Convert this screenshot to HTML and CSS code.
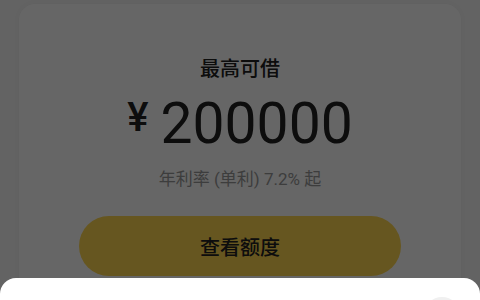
FILE: index.html
```html
<!DOCTYPE html>
<html lang="zh-CN">
<head>
<meta charset="utf-8">
<title>最高可借</title>
<link rel="stylesheet" href="styles.css">
</head>
<body>
<div class="page">
  <div class="card">
    <div class="title">最高可借</div>
    <div class="amount">
      <span class="currency">¥</span>
      <span class="value">200000</span>
    </div>
    <div class="rate">年利率 (单利) 7.2% 起</div>
    <button class="cta">查看额度</button>
  </div>
</div>
<div class="mask"></div>
<div class="sheet">
  <div class="close"></div>
</div>
</body>
</html>
```
FILE: styles.css
```css
html, body {
  margin: 0;
  padding: 0;
  height: 100%;
  overflow: hidden;
}
body {
  background: #f7f7f7;
  font-family: Roboto, "Noto Sans CJK SC", sans-serif;
}
.page {
  padding: 4px 19px 0;
}
.card {
  background: #fff;
  border-radius: 16px;
  padding: 50px 60px 20px;
  display: flex;
  flex-direction: column;
  align-items: center;
  box-shadow: 0 0 6px rgba(0,0,0,0.04);
}
.title {
  font-family: "Noto Sans CJK SC", sans-serif;
  font-size: 20px;
  line-height: 28px;
  font-weight: 500;
  color: #222;
}
.amount {
  margin-top: 14px;
  display: flex;
  align-items: flex-start;
  color: #222;
}
.currency {
  font-size: 40px;
  line-height: 40px;
  font-weight: 500;
  margin-top: 2px;
  margin-right: 12px;
}
.value {
  font-size: 57px;
  line-height: 56px;
  font-weight: 400;
}
.rate {
  margin-top: 16px;
  font-size: 17px;
  line-height: 22px;
  color: #999;
}
.cta {
  margin-top: 26px;
  align-self: stretch;
  height: 60px;
  border: none;
  border-radius: 30px;
  background: #ffd750;
  font-family: "Noto Sans CJK SC", sans-serif;
  font-size: 20px;
  font-weight: 500;
  color: #222;
  padding: 0;
}
.mask {
  position: fixed;
  inset: 0;
  background: rgba(0,0,0,0.6);
}
.sheet {
  position: fixed;
  left: 0;
  right: 0;
  top: 278px;
  bottom: 0;
  background: #fff;
  border-radius: 16px 16px 0 0;
}
.close {
  position: absolute;
  top: 19px;
  right: 20px;
  width: 36px;
  height: 36px;
  border-radius: 50%;
  background: #f0f0f0;
}
```
